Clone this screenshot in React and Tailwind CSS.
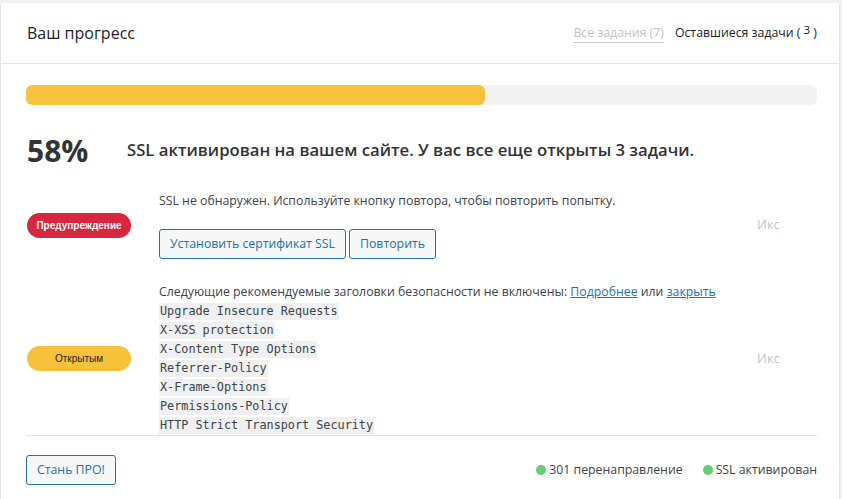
import React from "react";

const codes = [
  "Upgrade Insecure Requests",
  "X-XSS protection",
  "X-Content Type Options",
  "Referrer-Policy",
  "X-Frame-Options",
  "Permissions-Policy",
  "HTTP Strict Transport Security",
];

function Badge({ tone, children }) {
  const cls =
    tone === "red"
      ? "bg-[#d7263d] text-white font-bold"
      : "bg-[#f8c13a] text-[#222] font-normal";
  return (
    <span
      className={`ml-[1px] flex h-[25px] w-[104px] items-center justify-center rounded-full text-[10px] font-['Liberation_Sans',Arial,sans-serif] ${cls}`}
    >
      {children}
    </span>
  );
}

function Btn({ children }) {
  return (
    <button className="h-[30px] rounded-[3px] border border-[#2271b1] bg-[#f6f7f7] px-[10px] text-[12.3px] text-[#2271b1]">
      {children}
    </button>
  );
}

export default function App() {
  return (
    <div className="h-[499px] overflow-hidden bg-[#f0f0f1] pt-[3px] font-['Open_Sans',sans-serif] text-[#3c434a]">
      <div className="mr-[2px] h-[496px] border-x border-[#e2e4e7] bg-white">
        <div className="flex h-[61px] items-center justify-between border-b border-[#e2e4e7] pl-[26px] pr-[22px]">
          <h2 className="text-[16px] text-[#1d2327]">Ваш прогресс</h2>
          <div className="flex items-center gap-[11px] text-[12.3px]">
            <span className="border-b border-[#ccc] leading-[18px] text-[#c3c4c7]">
              Все задания (7)
            </span>
            <span className="leading-[18px] text-[#1d2327]">
              Оставшиеся задачи ({" "}
              <span className="relative -top-[3px] text-[11.5px]">3</span> )
            </span>
          </div>
        </div>

        <div className="pl-[25px] pr-[22px]">
          <div className="mt-[21px] h-[20px] overflow-hidden rounded-[6px] bg-[#f3f3f3]">
            <div className="h-full w-[58%] rounded-[6px] bg-[#f8c33c]" />
          </div>

          <div className="mt-[25px] flex h-[40px] items-center">
            <span className="w-[101px] pl-[1px] text-[30px] font-bold text-[#333]">
              58%
            </span>
            <span className="text-[16.7px] font-semibold text-[#333]">
              SSL активирован на вашем сайте. У вас все еще открыты 3 задачи.
            </span>
          </div>

          <div className="mt-[21px] flex items-center">
            <div className="w-[133px]">
              <Badge tone="red">Предупреждение</Badge>
            </div>
            <div className="flex-1 text-[12.3px]">
              <p className="leading-[20px]">
                SSL не обнаружен. Используйте кнопку повтора, чтобы повторить попытку.
              </p>
              <div className="mt-[18px] flex gap-[3px]">
                <Btn>Установить сертификат SSL</Btn>
                <Btn>Повторить</Btn>
              </div>
            </div>
            <div className="w-[60px] text-[13px] text-[#c3c4c7]">Икс</div>
          </div>

          <div className="mt-[23px] flex items-center border-b border-[#e2e4e7]">
            <div className="w-[133px]">
              <Badge tone="yellow">Открытым</Badge>
            </div>
            <div className="flex-1 text-[12.3px]">
              <p className="leading-[20px]">
                Следующие рекомендуемые заголовки безопасности не включены:{" "}
                <a href="#" className="text-[#2271b1] underline">
                  Подробнее
                </a>{" "}
                или{" "}
                <a href="#" className="text-[#2271b1] underline">
                  закрыть
                </a>
              </p>
              {codes.map((c) => (
                <div key={c} className="flex h-[19px] items-center">
                  <code className="inline-block bg-[#f0f0f1] px-[1px] text-[11.8px] leading-[17px] text-[#3c434a] font-['DejaVu_Sans_Mono',monospace]">
                    {c}
                  </code>
                </div>
              ))}
            </div>
            <div className="w-[60px] text-[13px] text-[#c3c4c7]">Икс</div>
          </div>

          <div className="mt-[19px] flex items-center justify-between">
            <button className="h-[30px] rounded-[3px] border border-[#2271b1] bg-[#f6f7f7] px-[10px] text-[12.3px] text-[#2271b1]">
              Стань ПРО!
            </button>
            <div className="flex items-center gap-[20px] text-[12.3px]">
              <span className="flex items-center gap-[3px]">
                <span className="h-[10px] w-[10px] rounded-full bg-[#61ce70]" />
                301 перенаправление
              </span>
              <span className="flex items-center gap-[3px]">
                <span className="h-[10px] w-[10px] rounded-full bg-[#61ce70]" />
                SSL активирован
              </span>
            </div>
          </div>
        </div>
      </div>
    </div>
  );
}
